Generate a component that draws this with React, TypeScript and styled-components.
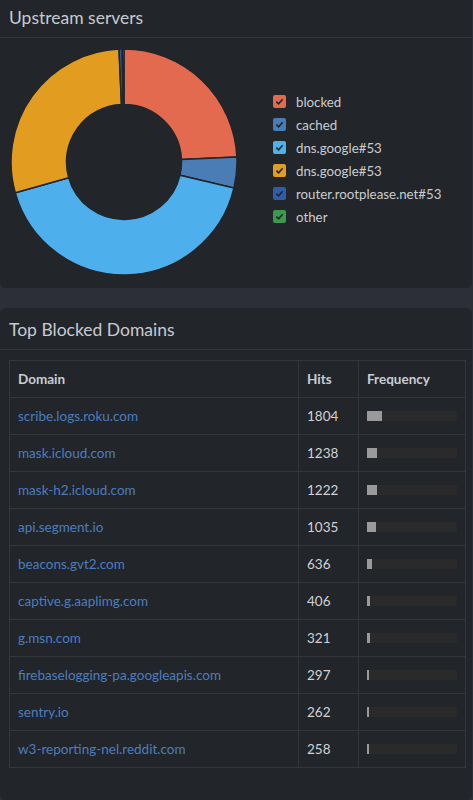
import React from "react";
import styled, { createGlobalStyle } from "styled-components";

const Global = createGlobalStyle`
  html, body { margin: 0; padding: 0; background: #2c2f38; }
  body { font-family: Lato, "Noto Sans", sans-serif; color: #c8ccd1; overflow: hidden; }
`;

const Page = styled.div`
  display: flex;
  flex-direction: column;
  gap: 20px;
  width: 472px;
  margin-top: -4px;
`;

const Card = styled.section`
  background: #222529;
  border-radius: 6px;
  display: flex;
  flex-direction: column;
`;

const CardHeader = styled.h2`
  margin: 0;
  height: 42px;
  box-sizing: border-box;
  padding: 1px 9px 0;
  display: flex;
  align-items: center;
  font-size: 17.5px;
  font-weight: 400;
  color: #c7cbd0;
  border-bottom: 1px solid #33373c;
`;

const ChartBody = styled.div`
  display: flex;
  align-items: center;
  padding: 11px 0 13px 11px;
  gap: 36px;
`;

const Legend = styled.ul`
  list-style: none;
  margin: 0;
  padding: 0;
  display: flex;
  flex-direction: column;
  gap: 7px;
  margin-top: -6px;
`;

const LegendItem = styled.li`
  display: flex;
  align-items: center;
  gap: 10px;
  font-size: 13.3px;
  height: 16px;
  color: #c9cdd2;
`;

const Check = styled.span<{ $c: string }>`
  width: 13px;
  height: 13px;
  border-radius: 2px;
  background: ${(p) => p.$c};
  display: flex;
  align-items: center;
  justify-content: center;
`;

const TableBody = styled.div`
  padding: 10px 6px 32px 9px;
`;

const Table = styled.table`
  width: 100%;
  border-collapse: collapse;
  font-size: 13.5px;
`;

const Th = styled.th<{ $w?: number }>`
  text-align: left;
  font-weight: 700;
  color: #c9ced4;
  height: 37px;
  padding: 0 8px;
  border: 1px solid #33373c;
  ${(p) => (p.$w ? `width: ${p.$w}px;` : "")}
  box-sizing: border-box;
`;

const Td = styled.td`
  height: 37px;
  padding: 0 8px;
  border: 1px solid #33373c;
  box-sizing: border-box;
  color: #d0d3d7;
`;

const DomainLink = styled.a`
  color: #4b7ec0;
  text-decoration: none;
`;

const Track = styled.div`
  height: 10px;
  background: #2b2a2a;
  display: flex;
`;

const Fill = styled.div`
  height: 100%;
  background: #9a9a9a;
`;

const segments = [
  { label: "blocked", color: "#e3694f", value: 24.3 },
  { label: "cached", color: "#4a7db6", value: 4.4 },
  { label: "dns.google#53", color: "#4db0ec", value: 41.9 },
  { label: "dns.google#53", color: "#e29c20", value: 28.7 },
  { label: "router.rootplease.net#53", color: "#2a5ab0", value: 0.45 },
  { label: "other", color: "#3a9d4f", value: 0.25 },
];

const legendColors = ["#e26a50", "#4a7cb6", "#4eb1ec", "#e29e22", "#2f5cae", "#3a9a4e"];

function arcPath(cx: number, cy: number, r1: number, r0: number, a0: number, a1: number) {
  const p = (r: number, a: number) => [cx + r * Math.cos(a), cy + r * Math.sin(a)];
  const large = a1 - a0 > Math.PI ? 1 : 0;
  const [x0, y0] = p(r1, a0);
  const [x1, y1] = p(r1, a1);
  const [x2, y2] = p(r0, a1);
  const [x3, y3] = p(r0, a0);
  return `M${x0},${y0} A${r1},${r1} 0 ${large} 1 ${x1},${y1} L${x2},${y2} A${r0},${r0} 0 ${large} 0 ${x3},${y3} Z`;
}

function Donut() {
  const total = segments.reduce((s, x) => s + x.value, 0);
  let a = -Math.PI / 2;
  const cx = 113, cy = 113;
  return (
    <svg width={226} height={226} viewBox="0 0 226 226">
      {segments.map((s, i) => {
        const a0 = a;
        const a1 = a + (s.value / total) * Math.PI * 2;
        a = a1;
        return (
          <path
            key={i}
            d={arcPath(cx, cy, 113, 57.5, a0, a1)}
            fill={s.color}
            stroke="#222529"
            strokeWidth={1.5}
          />
        );
      })}
    </svg>
  );
}

const rows: [string, number][] = [
  ["scribe.logs.roku.com", 1804],
  ["mask.icloud.com", 1238],
  ["mask-h2.icloud.com", 1222],
  ["api.segment.io", 1035],
  ["beacons.gvt2.com", 636],
  ["captive.g.aaplimg.com", 406],
  ["g.msn.com", 321],
  ["firebaselogging-pa.googleapis.com", 297],
  ["sentry.io", 262],
  ["w3-reporting-nel.reddit.com", 258],
];

export default function App() {
  return (
    <>
      <Global />
      <Page>
        <Card>
          <CardHeader>Upstream servers</CardHeader>
          <ChartBody>
            <Donut />
            <Legend>
              {segments.map((s, i) => (
                <LegendItem key={i}>
                  <Check $c={legendColors[i]}>
                    <svg width="9" height="9" viewBox="0 0 10 10">
                      <path d="M1.5 5.2 L4 7.5 L8.5 2.5" fill="none" stroke="#222529" strokeWidth="1.8" />
                    </svg>
                  </Check>
                  {s.label}
                </LegendItem>
              ))}
            </Legend>
          </ChartBody>
        </Card>
        <Card>
          <CardHeader>Top Blocked Domains</CardHeader>
          <TableBody>
            <Table>
              <thead>
                <tr>
                  <Th>Domain</Th>
                  <Th $w={60}>Hits</Th>
                  <Th $w={107}>Frequency</Th>
                </tr>
              </thead>
              <tbody>
                {rows.map(([d, h]) => (
                  <tr key={d}>
                    <Td>
                      <DomainLink href="#">{d}</DomainLink>
                    </Td>
                    <Td>{h}</Td>
                    <Td>
                      <Track>
                        <Fill style={{ width: `${(h / 1804) * 16.5}%` }} />
                      </Track>
                    </Td>
                  </tr>
                ))}
              </tbody>
            </Table>
          </TableBody>
        </Card>
      </Page>
    </>
  );
}
